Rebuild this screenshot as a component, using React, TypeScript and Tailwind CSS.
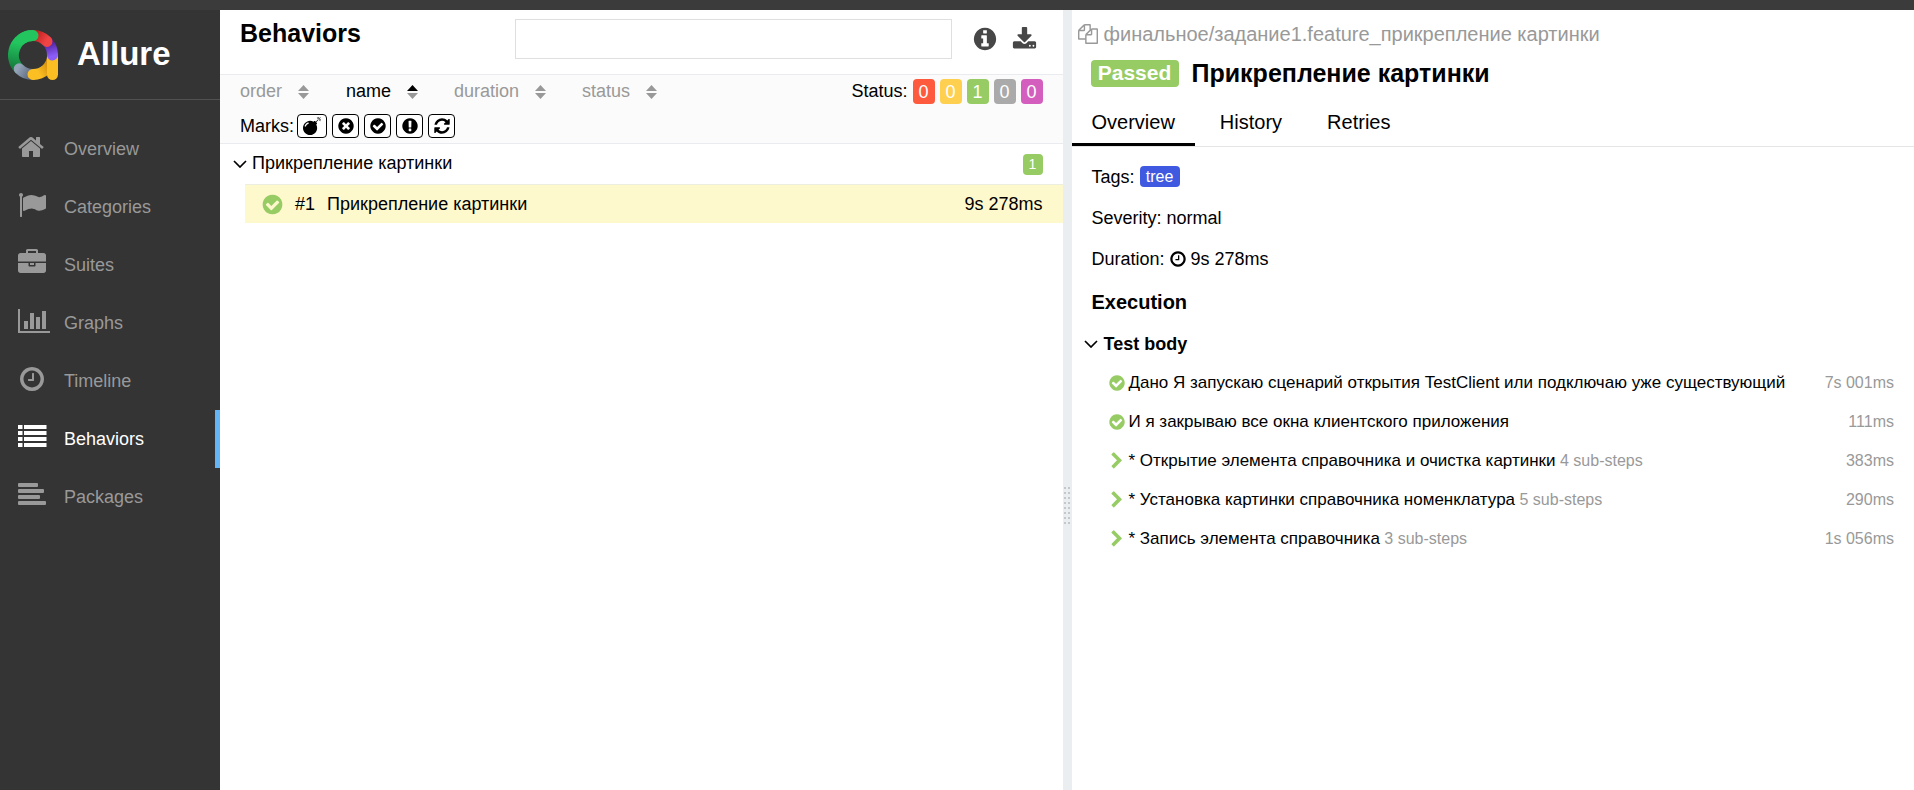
import type { ReactNode } from "react";

const DISC =
  "M1664 896q0 209-103 385.5t-279.5 279.5-385.5 103-385.5-103-279.5-279.5-103-385.5 103-385.5 279.5-279.5 385.5-103 385.5 103 279.5 279.5 103 385.5z";

const PATHS = {
  home: "M1408 992v480q0 26-19 45t-45 19h-384v-384h-256v384h-384q-26 0-45-19t-19-45v-480q0-1 .5-3t.5-3l575-474 575 474q1 2 1 6zm223-69l-62 74q-8 9-21 11h-3q-13 0-21-7l-692-577-692 577q-12 8-24 7-13-2-21-11l-62-74q-8-10-7-23.5t11-21.5l719-599q32-26 76-26t76 26l244 204v-195q0-14 9-23t23-9h192q14 0 23 9t9 23v408l219 182q10 8 11 21.5t-7 23.5z",
  flag: "M320 256q0 72-64 110v1266q0 13-9.5 22.5t-22.5 9.5h-64q-13 0-22.5-9.5t-9.5-22.5v-1266q-64-38-64-110 0-53 37.5-90.5t90.5-37.5 90.5 37.5 37.5 90.5zm1472 64v763q0 25-12.5 38.5t-39.5 27.5q-215 116-369 116-61 0-123.5-22t-108.5-48-115.5-48-142.5-22q-192 0-464 146-17 9-33 9-26 0-45-19t-19-45v-742q0-32 31-55 21-14 79-43 236-120 421-120 107 0 200 29t219 88q38 19 88 19 54 0 117.5-21t110-47 88-47 54.5-21q26 0 45 19t19 45z",
  briefcase:
    "M640 256h512v-128h-512v128zm1152 640v480q0 66-47 113t-113 47h-1472q-66 0-113-47t-47-113v-480h672v160q0 26 19 45t45 19h320q26 0 45-19t19-45v-160h672zm-768 0v128h-256v-128h256zm768-480v384h-1792v-384q0-66 47-113t113-47h352v-160q0-40 28-68t68-28h576q40 0 68 28t28 68v160h352q66 0 113 47t47 113z",
  chart:
    "M640 896v512h-256v-512h256zm384-512v1024h-256v-1024h256zm1024 1152v128h-2048v-1536h128v1408h1920zm-640-896v768h-256v-768h256zm384-384v1152h-256v-1152h256z",
  clock:
    "M1024 544v448q0 14-9 23t-23 9h-320q-14 0-23-9t-9-23v-64q0-14 9-23t23-9h224v-352q0-14 9-23t23-9h64q14 0 23 9t9 23zm416 352q0-148-73-273t-198-198-273-73-273 73-198 198-73 273 73 273 198 198 273 73 273-73 198-198 73-273zm224 0q0 209-103 385.5t-279.5 279.5-385.5 103-385.5-103-279.5-279.5-103-385.5 103-385.5 279.5-279.5 385.5-103 385.5 103 279.5 279.5 103 385.5z",
  list: "M0 128h288v256h-288zM384 128h1440v256h-1440zM0 512h288v256h-288zM384 512h1440v256h-1440zM0 896h288v256h-288zM384 896h1440v256h-1440zM0 1280h288v256h-288zM384 1280h1440v256h-1440z",
  align:
    "M64 128h1152q64 0 64 64v128q0 64-64 64h-1152q-64 0-64-64v-128q0-64 64-64zM64 512h1536q64 0 64 64v128q0 64-64 64h-1536q-64 0-64-64v-128q0-64 64-64zM64 896h1280q64 0 64 64v128q0 64-64 64h-1280q-64 0-64-64v-128q0-64 64-64zM64 1280h1664q64 0 64 64v128q0 64-64 64h-1664q-64 0-64-64v-128q0-64 64-64z",
  check:
    DISC +
    "M1412 734q0-28-18-46l-91-90q-19-19-45-19t-45 19l-408 407-226-226q-19-19-45-19t-45 19l-91 90q-18 18-18 46 0 27 18 45l362 362q19 19 45 19 27 0 46-19l543-543q18-18 18-45z",
  times:
    DISC +
    "M1277 1122q0-26-19-45l-181-181 181-181q19-19 19-45 0-27-19-46l-90-90q-19-19-46-19-26 0-45 19l-181 181-181-181q-19-19-45-19-27 0-46 19l-90 90q-19 19-19 46 0 26 19 45l181 181-181 181q-19 19-19 45 0 27 19 46l90 90q19 19 46 19 26 0 45-19l181-181 181 181q19 19 45 19 27 0 46-19l90-90q19-19 19-46z",
  exclamation:
    DISC +
    "M1024 1375v-190q0-14-9.5-23.5t-22.5-9.5h-192q-13 0-23 10t-10 23v190q0 13 10 23t23 10h192q13 0 22.5-9.5t9.5-23.5zm-2-344l18-621q0-12-10-18-10-8-24-8h-220q-14 0-24 8-10 6-10 18l17 621q0 10 10 17.5t24 7.5h185q14 0 23.5-7.5t10.5-17.5z",
  info:
    DISC +
    "M1152 1376v-160q0-14-9-23t-23-9h-96v-512q0-14-9-23t-23-9h-320q-14 0-23 9t-9 23v160q0 14 9 23t23 9h96v320h-96q-14 0-23 9t-9 23v160q0 14 9 23t23 9h448q14 0 23-9t9-23zm-128-896v-160q0-14-9-23t-23-9h-192q-14 0-23 9t-9 23v160q0 14 9 23t23 9h192q14 0 23-9t9-23z",
  refresh:
    "M1639 1056q0 5-1 7-64 268-268 434.5t-478 166.5q-146 0-282.5-55t-243.5-157l-129 129q-19 19-45 19t-45-19-19-45v-448q0-26 19-45t45-19h448q26 0 45 19t19 45-19 45l-137 137q71 66 161 102t187 36q134 0 250-65t186-179q11-17 53-117 8-23 30-23h192q13 0 22.5 9.5t9.5 22.5zm25-800v448q0 26-19 45t-45 19h-448q-26 0-45-19t-19-45 19-45l138-138q-148-137-349-137-134 0-250 65t-186 179q-11 17-53 117-8 23-30 23h-199q-13 0-22.5-9.5t-9.5-22.5v-7q65-268 270-434.5t480-166.5q146 0 284 55.5t245 156.5l130-129q19-19 45-19t45 19 19 45z",
  download:
    "M1344 1344q0-26-19-45t-45-19-45 19-19 45 19 45 45 19 45-19 19-45zm256 0q0-26-19-45t-45-19-45 19-19 45 19 45 45 19 45-19 19-45zm128-224v320q0 40-28 68t-68 28h-1472q-40 0-68-28t-28-68v-320q0-40 28-68t68-28h465l135 136q58 56 136 56t136-56l136-136h464q40 0 68 28t28 68zm-325-569q17 41-14 70l-448 448q-18 19-45 19t-45-19l-448-448q-31-29-14-70 17-39 59-39h256v-448q0-26 19-45t45-19h256q26 0 45 19t19 45v448h256q42 0 59 39z",
  files:
    "M1696 384q40 0 68 28t28 68v1216q0 40-28 68t-68 28h-960q-40 0-68-28t-28-68v-288h-544q-40 0-68-28t-28-68v-672q0-40 20-88t48-76l408-408q28-28 76-48t88-20h416q40 0 68 28t28 68v328q68-40 128-40h416zm-544 213l-299 299h299v-299zm-640-384l-299 299h299v-299zm196 647l316-316v-416h-384v416q0 40-28 68t-68 28h-416v640h512v-256q0-40 20-88t48-76zm956 804v-1152h-384v416q0 40-28 68t-68 28h-416v640h896z",
  chevron:
    "M1363 877l-742 742q-19 19-45 19t-45-19l-166-166q-19-19-19-45t19-45l531-531-531-531q-19-19-19-45t19-45l166-166q19-19 45-19t45 19l742 742q19 19 19 45t-19 45z",
  bomb: "M571 589q-10-25-34-35t-49 0q-108 44-191 127t-127 191q-10 25 0 49t35 34q13 5 24 5 42 0 60-40 34-84 98.5-148.5t148.5-98.5q25-11 35-35t0-49zm942-356l46 46-244 243 68 68q19 19 19 45.500t-19 45.500l-64 64q89 161 89 343 0 143-55.5 273.5t-150 225-225 150-273.5 55.5-273.5-55.5-225-150-150-225-55.5-273.5 55.5-273.5 150-225 225-150 273.5-55.5q182 0 343 89l64-64q19-19 45.5-19t45.5 19l68 68zm8-56q-10 10-22 10-13 0-23-10l-91-90q-9-10-9-23t9-23q10-9 23-9t23 9l90 91q10 9 10 22.5t-10 22.5zm230 230q-11 9-23 9t-23-9l-90-91q-10-9-10-22.5t10-22.5q9-10 22.5-10t22.5 10l91 90q9 10 9 23t-9 23zm41-183q0 14-9 23t-23 9h-96q-14 0-23-9t-9-23 9-23 23-9h96q14 0 23 9t9 23zm-192-192v96q0 14-9 23t-23 9-23-9-9-23v-96q0-14 9-23t23-9 23 9 9 23zm151 55l-91 90q-10 10-22 10-13 0-23-10-10-9-10-22.5t10-22.5l90-91q10-9 23-9t23 9q9 10 9 23t-9 23z",
};

type IconName = keyof typeof PATHS;

function Icon({ name, className }: { name: IconName; className: string }) {
  const width = name === "chart" ? 2048 : 1792;
  return (
    <svg viewBox={`0 0 ${width} 1792`} fill="currentColor" fillRule="evenodd" aria-hidden="true" className={`shrink-0 overflow-visible ${className}`}>
      <path d={PATHS[name]} />
    </svg>
  );
}

function Logo() {
  return (
    <svg viewBox="0 0 50 50" aria-hidden="true" className="size-[50px] shrink-0" fill="none" strokeWidth="11" strokeLinecap="round">
      <defs>
        <linearGradient id="green" gradientUnits="userSpaceOnUse" x1="8" y1="42" x2="14" y2="14">
          <stop offset="0" stopColor="#14733a" />
          <stop offset="1" stopColor="#22c55e" />
        </linearGradient>
        <linearGradient id="purple" gradientUnits="userSpaceOnUse" x1="40" y1="12" x2="44" y2="26">
          <stop offset="0" stopColor="#4c1d95" />
          <stop offset="1" stopColor="#8b5cf6" />
        </linearGradient>
        <linearGradient id="red" gradientUnits="userSpaceOnUse" x1="27" y1="5" x2="38" y2="12">
          <stop offset="0" stopColor="#c22020" />
          <stop offset="1" stopColor="#ef4444" />
        </linearGradient>
        <linearGradient id="gray" gradientUnits="userSpaceOnUse" x1="10" y1="38" x2="24" y2="46">
          <stop offset="0" stopColor="#94a3b8" />
          <stop offset="1" stopColor="#58647a" />
        </linearGradient>
        <linearGradient id="yellow" gradientUnits="userSpaceOnUse" x1="24" y1="44" x2="42" y2="34">
          <stop offset="0.3" stopColor="#fbbf24" />
          <stop offset="1" stopColor="#d08a0a" />
        </linearGradient>
      </defs>
      <path d="M11.200 38.800A19.500 19.500 0 0 1 25 5.500" stroke="url(#green)" />
      <path d="M11.200 38.800A19.500 19.500 0 0 0 25 44.500" stroke="url(#gray)" />
      <path d="M25 44.500A19.500 19.500 0 0 0 44.500 27" stroke="url(#yellow)" />
      <path d="M44.500 26V44.500" stroke="#fbbf24" />
      <path d="M39 11.500A19.500 19.500 0 0 1 44.500 25" stroke="url(#purple)" />
      <path d="M25 5.500A19.500 19.500 0 0 1 39 11.400" stroke="url(#red)" />
      <path d="M14 8.800A19.500 19.500 0 0 1 25 5.500" stroke="#22c55e" />
    </svg>
  );
}

function AngleDown() {
  return (
    <svg viewBox="0 0 14 8" aria-hidden="true" className="h-2 w-3.5 shrink-0" fill="none" stroke="currentColor" strokeWidth="1.7">
      <path d="M1 1l6 6 6-6" />
    </svg>
  );
}

const NAV: { label: string; icon: IconName; size: string }[] = [
  { label: "Overview", icon: "home", size: "size-7" },
  { label: "Categories", icon: "flag", size: "size-7" },
  { label: "Suites", icon: "briefcase", size: "size-7" },
  { label: "Graphs", icon: "chart", size: "h-7 w-8" },
  { label: "Timeline", icon: "clock", size: "size-7" },
  { label: "Behaviors", icon: "list", size: "size-7" },
  { label: "Packages", icon: "align", size: "size-7" },
];

function Sidebar() {
  return (
    <aside className="flex w-[220px] shrink-0 flex-col bg-[#343434]">
      <a href="#" className="flex h-[90px] items-center gap-[19px] border-b border-[#515151] pl-2 text-[33px] font-bold text-white">
        <Logo />
        <span className="pb-0.5">Allure</span>
      </a>
      <nav className="mt-5 flex flex-col">
        {NAV.map(({ label, icon, size }) => {
          const active = label === "Behaviors";
          return (
            <a
              key={label}
              href="#"
              aria-current={active ? "page" : undefined}
              className={`flex h-[58px] items-center border-r-[5px] pl-[18px] ${active ? "border-[#64b5f6] text-white" : "border-transparent text-[#999]"}`}
            >
              <span className="flex w-[46px] pb-1">
                <Icon name={icon} className={size} />
              </span>
              {label}
            </a>
          );
        })}
      </nav>
    </aside>
  );
}

function Sorter({ label, active, className }: { label: string; active?: boolean; className: string }) {
  return (
    <button type="button" className={`flex items-center ${active ? "text-black" : "text-[#999]"} ${className}`}>
      <span className="pb-0.5">{label}</span>
      <svg viewBox="0 0 11 14" aria-hidden="true" className="h-3.5 w-[11px]">
        <path d="M0 6L5.500 0L11 6z" fill={active ? "#000" : "#999"} />
        <path d="M0 8L5.500 14L11 8z" fill="#999" />
      </svg>
    </button>
  );
}

function Count({ children, className }: { children: ReactNode; className: string }) {
  return (
    <button type="button" className={`flex h-[25px] w-[22px] items-center justify-center rounded text-white ${className}`}>
      {children}
    </button>
  );
}

const MARKS: { icon: IconName; label: string }[] = [
  { icon: "bomb", label: "Flaky" },
  { icon: "times", label: "New failed" },
  { icon: "check", label: "New passed" },
  { icon: "exclamation", label: "New broken" },
  { icon: "refresh", label: "Retries" },
];

function BehaviorsPane() {
  return (
    <main className="min-w-0 flex-1">
      <header className="flex h-16 items-start pl-5 pr-[26px]">
        <h1 className="w-[275px] shrink-0 pt-2 text-[25px] leading-[30px] font-bold">Behaviors</h1>
        <input type="text" aria-label="Search" className="mt-[9px] h-10 min-w-0 flex-1 border border-[#dfdfdf] bg-white px-3 outline-none" />
        <div className="flex items-center gap-3.5 pt-4 pl-5 text-[#474747]">
          <button type="button" aria-label="Information">
            <Icon name="info" className="size-[26px]" />
          </button>
          <button type="button" aria-label="Download CSV">
            <Icon name="download" className="size-[25px]" />
          </button>
        </div>
      </header>
      <section className="h-[70px] border-y border-[#e9ebee] bg-[#fbfbfb] px-5 pt-1">
        <div className="flex h-[25px] items-center">
          <Sorter label="order" className="w-[106px] gap-4" />
          <Sorter label="name" active className="w-[108px] gap-4" />
          <Sorter label="duration" className="w-32 gap-4" />
          <Sorter label="status" className="gap-4" />
          <div className="ml-auto flex items-center gap-[5px]">
            <span className="pb-0.5">Status:</span>
            <Count className="bg-[#fd5a3e]">0</Count>
            <Count className="bg-[#ffd050]">0</Count>
            <Count className="bg-[#97cc64]">1</Count>
            <Count className="bg-[#aaaaaa]">0</Count>
            <Count className="bg-[#d35ebe]">0</Count>
          </div>
        </div>
        <div className="mt-2.5 flex h-6 items-center">
          <span className="w-[57px]">Marks:</span>
          <div className="flex gap-[5px]">
            {MARKS.map(({ icon, label }) => (
              <button
                key={icon}
                type="button"
                aria-label={label}
                className={`flex h-6 items-center justify-center rounded border border-black bg-white ${icon === "bomb" ? "w-[30px]" : "w-[27px]"}`}
              >
                <Icon name={icon} className="size-[18px]" />
              </button>
            ))}
          </div>
        </div>
      </section>
      <div className="flex h-10 items-center gap-[5px] pr-5 pl-[13px]">
        <AngleDown />
        <span className="pb-0.5">Прикрепление картинки</span>
        <span className="ml-auto flex h-[21px] w-5 items-center justify-center rounded bg-[#97cc64] text-[14px] text-white">1</span>
      </div>
      <a href="#" className="ml-[25px] flex h-[39px] items-center border-t border-[#eceee0] bg-[#fef8cd] pr-5 pl-4">
        <Icon name="check" className="size-[23px] text-[#97cc64]" />
        <span className="ml-[11px] w-8 shrink-0">#1</span>
        <span>Прикрепление картинки</span>
        <span className="ml-auto">9s 278ms</span>
      </a>
    </main>
  );
}

function Splitter() {
  return (
    <div role="separator" className="flex w-[9px] shrink-0 items-center justify-center bg-[#eaeef1]">
      <span className="grid grid-cols-2 gap-x-0.5 gap-y-[3px] pt-[210px]">
        {Array.from({ length: 16 }, (_, i) => (
          <i key={i} className="size-0.5 bg-[#c4c8cb]" />
        ))}
      </span>
    </div>
  );
}

const STEPS: { text: string; sub?: string; time: string }[] = [
  { text: "Дано Я запускаю сценарий открытия TestClient или подключаю уже существующий", time: "7s 001ms" },
  { text: "И я закрываю все окна клиентского приложения", time: "111ms" },
  { text: "* Открытие элемента справочника и очистка картинки", sub: "4 sub-steps", time: "383ms" },
  { text: "* Установка картинки справочника номенклатура", sub: "5 sub-steps", time: "290ms" },
  { text: "* Запись элемента справочника", sub: "3 sub-steps", time: "1s 056ms" },
];

function DetailsPane() {
  return (
    <section className="min-w-0 flex-1">
      <p className="flex items-center gap-1.5 pt-3 pl-1.5 text-[20px] leading-6 text-[#999]">
        <Icon name="files" className="size-5" />
        финальное/задание1.feature_прикрепление картинки
      </p>
      <h2 className="mt-3 flex items-center gap-[13px] pl-[19px] text-[25px] leading-[30px] font-bold">
        <span className="flex h-[27px] w-[88px] items-center justify-center rounded bg-[#97cc64] text-[21px] text-white">Passed</span>
        Прикрепление картинки
      </h2>
      <div role="tablist" className="mt-3 flex h-[47px] border-b border-[#e5e5e5] text-[20px]">
        <button type="button" role="tab" aria-selected="true" className="h-[46px] border-b-[3px] border-black px-5">
          Overview
        </button>
        <button type="button" role="tab" aria-selected="false" className="px-[25px] pb-0.5">
          History
        </button>
        <button type="button" role="tab" aria-selected="false" className="px-5 pb-0.5">
          Retries
        </button>
      </div>
      <div className="px-5 pt-[9px]">
        <div className="flex h-[41px] items-center gap-[5px]">
          Tags:
          <span className="flex h-[21px] w-10 items-center justify-center rounded bg-[#3f5ae0] text-[16px] text-white">tree</span>
        </div>
        <div className="flex h-[41px] items-center">Severity: normal</div>
        <div className="flex h-[41px] items-center gap-1">
          Duration:
          <Icon name="clock" className="size-[18px]" />
          9s 278ms
        </div>
        <h3 className="flex h-[45px] items-center text-[20px] font-bold">Execution</h3>
        <h4 className="-ml-2 flex h-[39px] items-center gap-[6px] font-bold">
          <AngleDown />
          Test body
        </h4>
        <ul className="pl-4">
          {STEPS.map(({ text, sub, time }) => (
            <li key={text} className="flex h-[39px] items-center gap-[3px] text-[17px]">
              <Icon name={sub ? "chevron" : "check"} className="size-[18px] text-[#97cc64]" />
              <span className="whitespace-nowrap">
                {text}
                {sub && <small className="text-[16px] text-[#999]"> {sub}</small>}
              </span>
              <span className="ml-auto text-[16px] whitespace-nowrap text-[#999]">{time}</span>
            </li>
          ))}
        </ul>
      </div>
    </section>
  );
}

export default function App() {
  return (
    <div className="flex min-h-screen flex-col bg-white font-['Liberation_Sans',Arial,sans-serif] text-[18px] leading-6 text-black">
      <div className="h-2.5 bg-[#3b3b3b]" />
      <div className="flex flex-1">
        <Sidebar />
        <BehaviorsPane />
        <Splitter />
        <DetailsPane />
      </div>
    </div>
  );
}
